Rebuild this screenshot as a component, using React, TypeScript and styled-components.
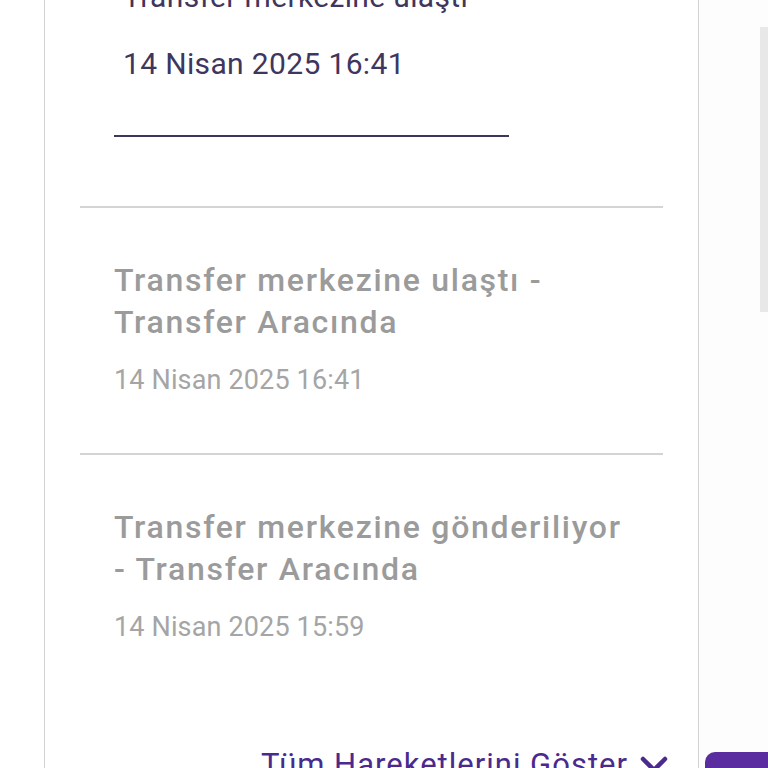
import React from 'react';
import styled, { createGlobalStyle } from 'styled-components';

const GlobalStyle = createGlobalStyle`
  html, body {
    margin: 0;
    padding: 0;
    background: #ffffff;
    font-family: Roboto, "Noto Sans", "Liberation Sans", sans-serif;
  }
`;

const Page = styled.div`
  display: flex;
  height: 768px;
  overflow: hidden;
  padding-left: 44px;
  box-sizing: border-box;
`;

const Card = styled.section`
  width: 655px;
  flex-shrink: 0;
  margin-top: -21px;
  padding: 0 35px;
  box-sizing: border-box;
  border-left: 1px solid #d2d2d2;
  border-right: 1px solid #d2d2d2;
  background: #ffffff;
`;

const ActiveItem = styled.div`
  padding-left: 34px;
  padding-bottom: 69px;
  border-bottom: 2px solid #d4d4d4;
`;

const ActiveTitle = styled.div`
  padding-left: 9px;
  font-size: 30px;
  line-height: 36px;
  letter-spacing: 0.35px;
  color: #3f3660;
  white-space: nowrap;
`;

const ActiveDate = styled.div`
  padding-left: 9px;
  margin-top: 31px;
  font-size: 30px;
  line-height: 36px;
  letter-spacing: 0.35px;
  color: #3f3660;
`;

const Underline = styled.div`
  width: 395px;
  height: 2px;
  margin-top: 53px;
  background: #3f3660;
`;

const Item = styled.div<{ $last?: boolean }>`
  padding: 51px 30px ${({ $last }) => ($last ? '0' : '57px')} 34px;
  border-bottom: ${({ $last }) => ($last ? 'none' : '2px solid #d4d4d4')};
`;

const ItemTitle = styled.div`
  font-size: 32px;
  line-height: 42px;
  font-weight: 500;
  letter-spacing: 1.7px;
  color: #9b9b9b;
`;

const ItemDate = styled.div`
  margin-top: 21px;
  font-size: 27px;
  line-height: 32px;
  letter-spacing: 0.15px;
  color: #a5a5a5;
`;

const Footer = styled.div`
  display: flex;
  justify-content: flex-end;
  align-items: center;
  gap: 12px;
  margin-top: 104px;
  margin-right: -5px;
`;

const ShowAll = styled.span`
  font-size: 31px;
  line-height: 36px;
  letter-spacing: 1px;
  color: #4a2a8c;
  white-space: nowrap;
`;

const Aside = styled.aside`
  flex: 1;
  display: flex;
  flex-direction: column;
  overflow: hidden;
  background: #fdfdfd;
`;

const Preview = styled.div`
  width: 40px;
  height: 285px;
  margin: 27px 0 0 61px;
  background: #e8e8e8;
  flex-shrink: 0;
`;

const ActionButton = styled.div`
  width: 80px;
  height: 60px;
  margin: auto 0 -44px 6px;
  border-radius: 10px;
  background: #5a2ca0;
  flex-shrink: 0;
`;

const Chevron = () => (
  <svg width="28" height="18" viewBox="0 0 28 18" fill="none">
    <path d="M3 3l11 11L25 3" stroke="#4a2a8c" strokeWidth="4.5" strokeLinecap="round" strokeLinejoin="round" />
  </svg>
);

const events = [
  { title: 'Transfer merkezine ulaştı - Transfer Aracında', date: '14 Nisan 2025 16:41' },
  { title: 'Transfer merkezine gönderiliyor - Transfer Aracında', date: '14 Nisan 2025 15:59' },
];

export default function App() {
  return (
    <>
      <GlobalStyle />
      <Page>
        <Card>
          <ActiveItem>
            <ActiveTitle>Transfer merkezine ulaştı</ActiveTitle>
            <ActiveDate>14 Nisan 2025 16:41</ActiveDate>
            <Underline />
          </ActiveItem>
          {events.map((e, i) => (
            <Item key={i} $last={i === events.length - 1}>
              <ItemTitle>{e.title}</ItemTitle>
              <ItemDate>{e.date}</ItemDate>
            </Item>
          ))}
          <Footer>
            <ShowAll>Tüm Hareketlerini Göster</ShowAll>
            <Chevron />
          </Footer>
        </Card>
        <Aside>
          <Preview />
          <ActionButton />
        </Aside>
      </Page>
    </>
  );
}
